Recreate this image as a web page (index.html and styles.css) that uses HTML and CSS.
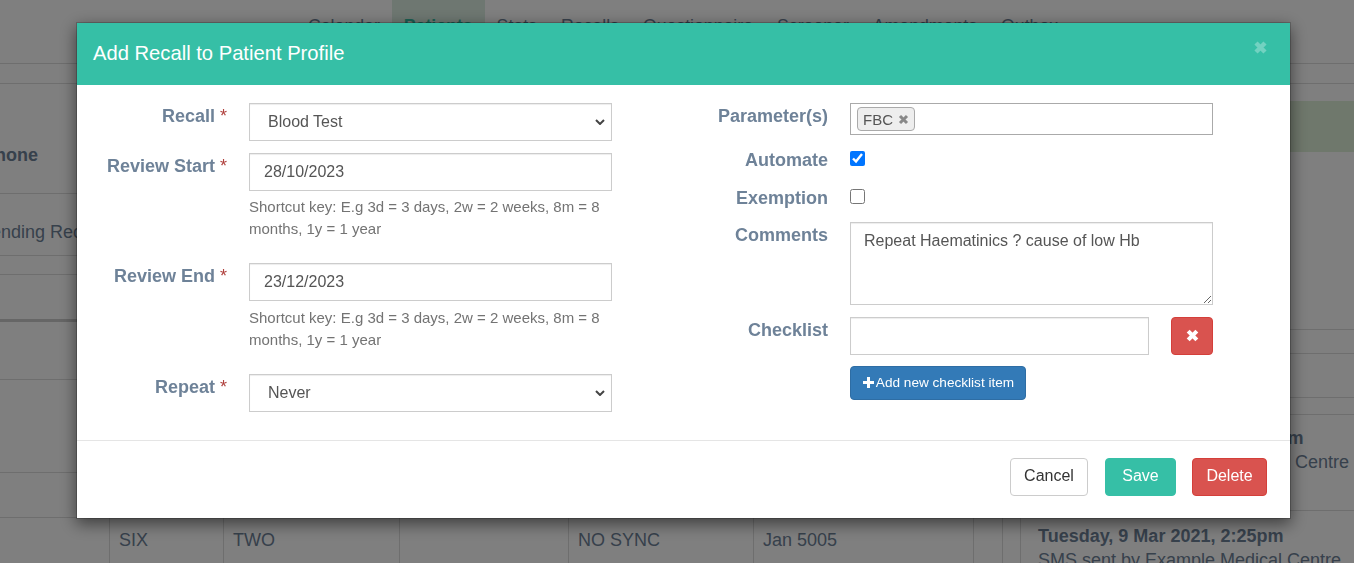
FILE: index.html
```html
<!DOCTYPE html>
<html lang="en">
<head>
<meta charset="utf-8">
<title>Add Recall to Patient Profile</title>
<link rel="stylesheet" href="styles.css">
</head>
<body>
<div class="page">
  <nav class="nav">
    <a class="nav-item">Calendar</a>
    <a class="nav-item active">Patients</a>
    <a class="nav-item">Stats</a>
    <a class="nav-item">Recalls</a>
    <a class="nav-item">Questionnaire</a>
    <a class="nav-item">Screener</a>
    <a class="nav-item">Amendments</a>
    <a class="nav-item">Outbox</a>
  </nav>
  <div class="subbar"></div>
  <div class="content">
    <main class="main">
      <div class="row r1"><strong class="phone">Phone</strong></div>
      <div class="row r2"><span class="pending">Pending Recalls</span></div>
      <div class="row r3"></div>
      <div class="row r4"></div>
      <div class="row r5"></div>
      <div class="row r6"></div>
      <div class="row r7"></div>
      <div class="cells">
        <div class="cell c1"></div>
        <div class="cell c2">SIX</div>
        <div class="cell c3">TWO</div>
        <div class="cell c4"></div>
        <div class="cell c5">NO SYNC</div>
        <div class="cell c6">Jan 5005</div>
        <div class="cell c7"></div>
      </div>
    </main>
    <aside class="side">
      <div class="green"></div>
      <div class="sline s1"></div>
      <div class="sline s2"></div>
      <div class="sline s3"></div>
      <div class="sline s4"></div>
      <div class="note n1"><strong>Tuesday, 16 Mar 2021, 10:25pm</strong><span class="sms">SMS sent by Example Medical Centre</span></div>
      <div class="note n2"><strong>Tuesday, 9 Mar 2021, 2:25pm</strong><span>SMS sent by Example Medical Centre</span></div>
    </aside>
  </div>
</div>
<div class="backdrop"></div>
<section class="modal">
  <header class="modal-header">
    <h4 class="modal-title">Add Recall to Patient Profile</h4>
    <svg class="close" viewBox="0 0 15 15"><path d="M3 3l9 9M12 3l-9 9"/></svg>
  </header>
  <div class="modal-body">
    <div class="col">
      <div class="field f-recall">
        <label class="label">Recall <i class="star">*</i></label>
        <div class="control"><select class="input select"><option>Blood Test</option></select></div>
      </div>
      <div class="field f-start">
        <label class="label">Review Start <i class="star">*</i></label>
        <div class="control">
          <input class="input" type="text" value="28/10/2023">
          <p class="help">Shortcut key: E.g 3d = 3 days, 2w = 2 weeks, 8m = 8 months, 1y = 1 year</p>
        </div>
      </div>
      <div class="field f-end">
        <label class="label">Review End <i class="star">*</i></label>
        <div class="control">
          <input class="input" type="text" value="23/12/2023">
          <p class="help">Shortcut key: E.g 3d = 3 days, 2w = 2 weeks, 8m = 8 months, 1y = 1 year</p>
        </div>
      </div>
      <div class="field">
        <label class="label">Repeat <i class="star">*</i></label>
        <div class="control"><select class="input select"><option>Never</option></select></div>
      </div>
    </div>
    <div class="col">
      <div class="field f-param">
        <label class="label">Parameter(s)</label>
        <div class="control">
          <div class="multi">
            <span class="chip">FBC<svg class="chip-x" viewBox="0 0 11 11"><path d="M2 2l7 7M9 2l-7 7"/></svg></span>
          </div>
        </div>
      </div>
      <div class="field f-auto">
        <label class="label">Automate</label>
        <div class="control"><input class="check" type="checkbox" checked></div>
      </div>
      <div class="field f-exempt">
        <label class="label">Exemption</label>
        <div class="control"><input class="check" type="checkbox"></div>
      </div>
      <div class="field f-comments">
        <label class="label">Comments</label>
        <div class="control"><textarea class="input area">Repeat Haematinics ? cause of low Hb</textarea></div>
      </div>
      <div class="field f-check">
        <label class="label">Checklist</label>
        <div class="control">
          <div class="check-row">
            <input class="input check-input" type="text">
            <button class="btn btn-danger btn-x" type="button"><svg class="x-icon" viewBox="0 0 12 12"><path d="M2 2l8 8M10 2l-8 8"/></svg></button>
          </div>
          <button class="btn btn-primary btn-add" type="button"><svg class="plus" viewBox="0 0 13 13"><path d="M6.500 1v11M1 6.500h11"/></svg>Add new checklist item</button>
        </div>
      </div>
    </div>
  </div>
  <footer class="modal-footer">
    <button class="btn btn-default" type="button">Cancel</button>
    <button class="btn btn-teal" type="button">Save</button>
    <button class="btn btn-danger" type="button">Delete</button>
  </footer>
</section>
</body>
</html>
```
FILE: styles.css
```css
* { box-sizing: border-box; }
html, body { margin: 0; height: 100%; overflow: hidden; }
body { font-family: "Liberation Sans", Arial, sans-serif; font-size: 16px; color: #333; background: #fff; }

.page { height: 563px; overflow: hidden; color: #6e8298; font-size: 18px; }
.nav { display: flex; height: 64px; padding-left: 296px; border-bottom: 1px solid #ddd; font-size: 17.700px; }
.nav-item { padding: 14px 12px 0; line-height: 24px; }
.nav-item.active { font-weight: 700; color: #36bfa6; background: #dcefe3; }
.subbar { height: 20px; border-bottom: 1px solid #ddd; }
.content { display: flex; }
.main { width: 1003px; flex: none; }
.row { border-bottom: 1px solid #ddd; overflow: hidden; white-space: nowrap; }
.r1 { height: 110px; padding-top: 59px; }
.r2 { height: 62px; padding-top: 26px; }
.r3 { height: 19px; }
.r4 { height: 47px; border-bottom: 3px solid #ccc; }
.r5 { height: 58px; }
.r6 { height: 93px; }
.r7 { height: 45px; }
.phone { display: block; margin-left: -17px; line-height: 24px; }
.pending { display: block; margin-left: -21px; line-height: 24px; }
.cells { display: flex; height: 46px; }
.cell { padding: 11px 9px; line-height: 22px; border-right: 1px solid #ddd; }
.c1 { width: 110px; }
.c2 { width: 114px; }
.c3 { width: 176px; }
.c4 { width: 169px; }
.c5 { width: 185px; }
.c6 { width: 220px; }
.c7 { width: 29px; }
.side { width: 334px; flex: none; margin-left: 17px; border-left: 1px solid #ddd; }
.green { height: 51px; margin-top: 17px; background: #dff0d8; }
.sline { border-bottom: 1px solid #ddd; }
.s1 { height: 178px; }
.s2 { height: 24px; }
.s3 { height: 44px; }
.s4 { height: 17px; }
.note { display: flex; flex-direction: column; white-space: nowrap; padding: 11px 0 0 17px; line-height: 24px; }
.n1 { height: 96px; border-bottom: 1px solid #ddd; }
.n1 .sms { padding-left: 8px; }
.n2 { padding-top: 13px; }

.backdrop { position: fixed; inset: 0; background: rgba(0, 0, 0, .5); }

.modal { position: fixed; left: 76px; top: 22px; width: 1215px; height: 497px; display: flex; flex-direction: column; background: #fff; border: 1px solid rgba(0, 0, 0, .2); box-shadow: 0 5px 15px rgba(0, 0, 0, .5); background-clip: padding-box; }
.modal-header { height: 62px; flex: none; display: flex; justify-content: space-between; padding: 0 22px 0 16px; background: #36bfa6; color: #fff; }
.modal-title { margin: 0; font-size: 20.200px; font-weight: 400; line-height: 60px; }
.close { width: 15px; height: 15px; margin-top: 17px; fill: none; stroke: rgba(255, 255, 255, .3); stroke-width: 4.500; }

.modal-body { flex: 1; display: flex; padding-top: 18px; border-bottom: 1px solid #e5e5e5; }
.col { flex: none; }
.col:first-child { width: 535px; }
.col:last-child { width: 601px; }
.field { display: flex; }
.label { flex: none; text-align: right; font-size: 18px; font-weight: 700; color: #6e8298; line-height: 26px; }
.col:first-child .label { width: 150px; margin-right: 22px; }
.col:last-child .label { width: 216px; margin-right: 22px; }
.star { font-style: normal; color: #b0413e; font-weight: 400; }
.control { width: 363px; flex: none; }
.input { display: block; width: 100%; height: 38px; padding: 6px 14px; border: 1px solid #ccc; background: #fff; color: #555; font: 16px "Liberation Sans", Arial, sans-serif; box-shadow: inset 0 1px 1px rgba(0, 0, 0, .075); border-radius: 0; }
.select { appearance: none; padding: 5px 14px 7px 18px; background: #fff url("data:image/svg+xml,%3Csvg xmlns='http://www.w3.org/2000/svg' width='10' height='6' viewBox='0 0 10 6'%3E%3Cpath d='M1 1l4 4 4-4' fill='none' stroke='%23444' stroke-width='2'/%3E%3C/svg%3E") no-repeat right 6px center; }
.f-recall { margin-bottom: 12px; }
.f-start { margin-bottom: 23px; }
.f-end { margin-bottom: 23px; }
.help { margin: 5px 0 0; font-size: 15px; line-height: 22px; color: #737373; }
.f-end .help { margin-top: 6px; }
.multi { height: 32px; padding: 3px 6px; border: 1px solid #aaa; background: #fff; }
.chip { display: inline-flex; align-items: center; height: 24px; padding: 0 5px; border: 1px solid #aaa; border-radius: 4px; background: #eee; color: #555; font-size: 15px; }
.chip-x { width: 11px; height: 11px; margin-left: 5px; fill: none; stroke: #888; stroke-width: 3; }
.f-param { height: 48px; }
.f-auto { height: 38px; }
.f-auto .label, .f-exempt .label { line-height: 18px; }
.f-exempt { height: 33px; }
.check { display: block; width: 15px; height: 15px; margin: 0; }
.f-comments { margin-bottom: 12px; }
.area { height: 83px; padding: 7px 13px; line-height: 22px; resize: both; }
.check-row { display: flex; justify-content: space-between; margin-bottom: 11px; }
.check-input { width: 299px; }
.btn { display: inline-flex; align-items: center; justify-content: center; height: 38px; margin: 0; padding: 0 0 2px; border: 1px solid transparent; border-radius: 4px; font: 16px "Liberation Sans", Arial, sans-serif; color: #fff; }
.btn-danger { background: #d9534f; border-color: #d43f3a; }
.btn-x { width: 42px; }
.x-icon { width: 13px; height: 13px; fill: none; stroke: #fff; stroke-width: 3.800; }
.btn-primary { background: #337ab7; border-color: #2e6da4; }
.btn-add { width: 176px; height: 34px; font-size: 13.600px; }
.plus { width: 13px; height: 13px; margin-right: 1px; fill: none; stroke: #fff; stroke-width: 3; }
.modal-footer { flex: none; height: 77px; display: flex; justify-content: flex-end; gap: 16px; padding: 17px 23px 0 0; }
.btn-default { width: 78px; margin-right: 1px; background: #fff; border-color: #ccc; color: #333; }
.btn-teal { width: 71px; background: #36bfa6; border-color: #36bfa6; }
.modal-footer .btn-danger { width: 75px; }
```
